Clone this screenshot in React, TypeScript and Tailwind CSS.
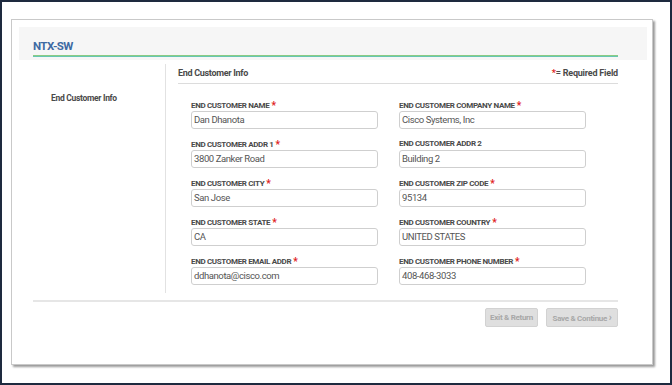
const FONT = "font-['Roboto','Liberation_Sans',sans-serif]";

type Field = {
  label: string;
  value: string;
  required: boolean;
};

const FIELDS: Field[] = [
  { label: "END CUSTOMER NAME", value: "Dan Dhanota", required: true },
  { label: "END CUSTOMER COMPANY NAME", value: "Cisco Systems, Inc", required: true },
  { label: "END CUSTOMER ADDR 1", value: "3800 Zanker Road", required: true },
  { label: "END CUSTOMER ADDR 2", value: "Building 2", required: false },
  { label: "END CUSTOMER CITY", value: "San Jose", required: true },
  { label: "END CUSTOMER ZIP CODE", value: "95134", required: true },
  { label: "END CUSTOMER STATE", value: "CA", required: true },
  { label: "END CUSTOMER COUNTRY", value: "UNITED STATES", required: true },
  { label: "END CUSTOMER EMAIL ADDR", value: "ddhanota@cisco.com", required: true },
  { label: "END CUSTOMER PHONE NUMBER", value: "408-468-3033", required: true },
];

function FormField({ field }: { field: Field }) {
  return (
    <div className="flex flex-col">
      <div className="h-[11px] leading-[11px] text-[8px] tracking-[-0.35px] font-bold text-[#4a4a4a] mb-px whitespace-nowrap">
        {field.label}
        {field.required && <span className="text-[#e02020] text-[10px] ml-[2px] relative top-[1px]">*</span>}
      </div>
      <div className="h-[18px] border border-[#cfcfcf] rounded-[3px] bg-white flex items-center px-[2px] text-[9.5px] tracking-[-0.4px] text-[#555]">
        {field.value}
      </div>
    </div>
  );
}

export default function App() {
  return (
    <div className={`w-[672px] h-[385px] border-2 border-[#1e2a3f] bg-white overflow-hidden ${FONT}`}>
      {/* Card */}
      <div className="mt-[17px] ml-[9px] w-[642px] h-[346px] border border-[#c9c9c9] bg-white shadow-[2px_2px_2px_rgba(0,0,0,0.4)]">
        {/* Header band */}
        <div className="mt-[7px] ml-[7px] w-[628px] h-[33px] bg-[#f6f6f6] flex flex-col justify-end pl-[14px] pb-[3px]">
          <div className="text-[11.5px] tracking-[-0.6px] font-bold text-[#3e6aa3] leading-[14px] mb-[2px]">NTX-SW</div>
          <div className="w-[585px] h-[2px] bg-gradient-to-b from-[#9ccc65] to-[#4fc3c8]" />
        </div>

        {/* Body */}
        <div className="ml-[21px] w-[585px]">
          <div className="flex mt-[4px] h-[229px]">
            <div className="w-[133px] border-r border-[#e2e2e2] pl-[18px] pt-[28px]">
              <div className="text-[8.5px] tracking-[-0.3px] font-bold text-[#4a4a4a]">End Customer Info</div>
            </div>
            <div className="flex-1 pl-[12px]">
              <div className="h-[20px] pt-px border-b border-[#dcdcdc] flex items-center justify-between">
                <div className="text-[9px] tracking-[-0.3px] font-bold text-[#4a4a4a]">End Customer Info</div>
                <div className="text-[9px] tracking-[-0.2px] font-bold text-[#4a4a4a]">
                  <span className="text-[#e02020]">*</span>= Required Field
                </div>
              </div>
              <div className="pl-[13px] pt-[15px] grid grid-cols-[187px_187px] gap-x-[21px] gap-y-[9px]">
                {FIELDS.map((f) => (
                  <FormField key={f.label} field={f} />
                ))}
              </div>
            </div>
          </div>

          <div className="mt-[7px] h-[2px] bg-[#e6e6e6]" />

          {/* Actions */}
          <div className="mt-[6px] flex justify-end gap-[8px]">
            <button className="w-[53px] h-[19px] rounded-[2px] border border-[#d2d2d2] bg-[#dfdfdf] text-[8px] tracking-[-0.3px] font-bold text-[#a8a8a8] whitespace-nowrap">
              Exit &amp; Return
            </button>
            <button className="w-[72px] h-[19px] rounded-[2px] border border-[#d2d2d2] bg-[#dfdfdf] text-[8px] tracking-[-0.3px] font-bold text-[#a8a8a8] whitespace-nowrap">
              Save &amp; Continue <span className="text-[10px]">›</span>
            </button>
          </div>
        </div>
      </div>
    </div>
  );
}
